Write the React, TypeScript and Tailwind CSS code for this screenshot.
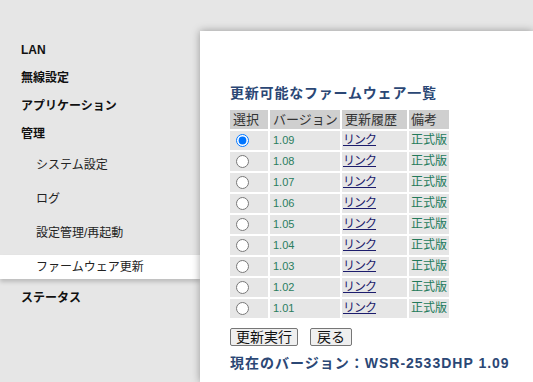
import React from 'react';

const versions = ['1.09', '1.08', '1.07', '1.06', '1.05', '1.04', '1.03', '1.02', '1.01'];

function NavTop({ label }: { label: string }) {
  return (
    <div className="flex h-[28px] items-center pl-[21px] text-[12px] font-bold text-[#111]">
      {label}
    </div>
  );
}

function NavSub({ label, active }: { label: string; active?: boolean }) {
  return (
    <div
      className={
        active
          ? 'relative z-10 flex h-[24px] items-center bg-white pl-[36px] text-[12px] text-[#222] shadow-[0_3px_4px_rgba(0,0,0,0.18)]'
          : 'flex h-[24px] items-center pl-[36px] text-[12px] text-[#222]'
      }
    >
      {label}
    </div>
  );
}

export default function App() {
  return (
    <div
      className="flex h-[382px] w-[533px] overflow-hidden bg-[#e6e6e6]"
      style={{ fontFamily: '"Liberation Sans", "Noto Sans CJK JP", sans-serif' }}
    >
      {/* sidebar */}
      <div className="w-[200px] shrink-0 pt-[36px]">
        <NavTop label="LAN" />
        <NavTop label="無線設定" />
        <NavTop label="アプリケーション" />
        <NavTop label="管理" />
        <div className="flex flex-col gap-[10px] py-[5px]">
          <NavSub label="システム設定" />
          <NavSub label="ログ" />
          <NavSub label="設定管理/再起動" />
          <NavSub label="ファームウェア更新" active />
        </div>
        <NavTop label="ステータス" />
      </div>

      {/* content panel */}
      <div className="flex-1 pt-[31px]">
        <div className="relative z-20 h-full bg-white pl-[30px] pt-[53px] shadow-[0_0_8px_rgba(0,0,0,0.35)]">
          <div className="whitespace-nowrap text-[14px] font-bold leading-[18px] tracking-[0.8px] text-[#2b4775]">
            更新可能なファームウェア一覧
          </div>

          <table className="ml-[-2px] mt-[6px] table-fixed border-separate border-spacing-[2px] whitespace-nowrap bg-white">
            <colgroup>
              <col className="w-[38px]" />
              <col className="w-[70px]" />
              <col className="w-[65px]" />
              <col className="w-[40px]" />
            </colgroup>
            <thead>
              <tr className="text-[13px] text-[#333]">
                <th className="h-[19px] bg-[#cfcfcf] p-0 pl-[3px] text-left font-normal leading-[19px]">選択</th>
                <th className="h-[19px] bg-[#cfcfcf] p-0 pl-[3px] text-left font-normal leading-[19px]">バージョン</th>
                <th className="h-[19px] bg-[#cfcfcf] p-0 pl-[3px] text-left font-normal leading-[19px]">更新履歴</th>
                <th className="h-[19px] bg-[#cfcfcf] p-0 pl-[2px] text-left font-normal leading-[19px]">備考</th>
              </tr>
            </thead>
            <tbody>
              {versions.map((v, i) => (
                <tr key={v}>
                  <td className="h-[19px] bg-[#e6e6e6] p-0 pl-[6px] align-middle">
                    <input
                      type="radio"
                      name="fw"
                      defaultChecked={i === 0}
                      className="m-0 block h-[13px] w-[13px]"
                    />
                  </td>
                  <td className="h-[19px] bg-[#e6e6e6] p-0 pl-[3px] text-[11px] leading-[19px] text-[#2a7d5e]">{v}</td>
                  <td className="h-[19px] bg-[#e6e6e6] p-0 pl-[1px] text-[12px] leading-[19px]">
                    <a href="#" className="tracking-[-1px] text-[#1c1c6c] underline">
                      リンク
                    </a>
                  </td>
                  <td className="h-[19px] bg-[#e6e6e6] p-0 pl-[2px] text-[12px] leading-[19px] text-[#237a5a]">正式版</td>
                </tr>
              ))}
            </tbody>
          </table>

          <div className="mt-[8px] flex gap-[12px]">
            <button className="h-[18px] rounded-[2px] border border-[#767676] bg-[#efefef] px-[5px] text-[14px] leading-[16px] text-[#111]">
              更新実行
            </button>
            <button className="h-[18px] rounded-[2px] border border-[#767676] bg-[#efefef] px-[6px] text-[14px] leading-[16px] text-[#111]">
              戻る
            </button>
          </div>

          <div className="mt-[8px] whitespace-nowrap text-[14px] font-bold leading-[18px] tracking-[1px] text-[#2b4775]">
            現在のバージョン：WSR-2533DHP 1.09
          </div>
        </div>
      </div>
    </div>
  );
}
